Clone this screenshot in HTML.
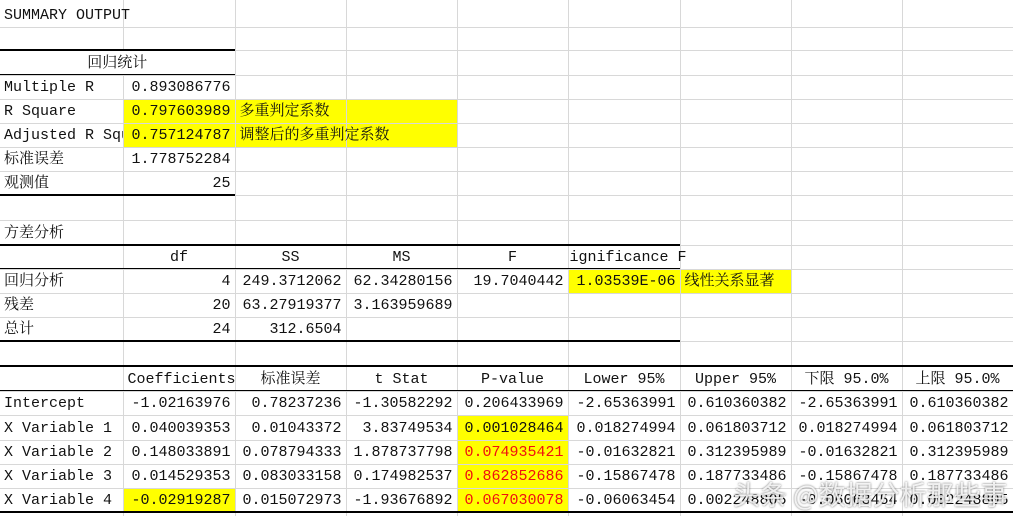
<!DOCTYPE html>
<html><head><meta charset="utf-8">
<style>
html,body{margin:0;padding:0;background:#fff;width:1013px;height:516px;overflow:hidden;position:relative}
table{border-collapse:collapse;table-layout:fixed;width:1013px;position:absolute;left:0;top:0}
td{border-right:1px solid #d8d8d8;border-bottom:1px solid #d8d8d8;padding:0 4px;white-space:nowrap;overflow:visible;
font-family:"Liberation Mono","Noto Serif CJK SC",monospace;font-size:15px;color:#111;line-height:20px;vertical-align:bottom;padding-bottom:1px}
.r{text-align:right}.c{text-align:center}
.y{background:#ffff00}
.red{color:#f01010}
.h{overflow:hidden}
.line{position:absolute;background:#000;height:2px}
.thin{position:absolute;background:#000;height:1px}
.wm{position:absolute;left:733px;top:474px;font-family:"Noto Sans CJK SC",sans-serif;font-size:27px;color:rgba(255,255,255,0.85);text-shadow:0 0 2px rgba(0,0,0,.6);white-space:nowrap;letter-spacing:0}
</style></head><body>
<table>
<colgroup><col style="width:123px"><col style="width:112px"><col style="width:111px"><col style="width:111px"><col style="width:111px"><col style="width:112px"><col style="width:111px"><col style="width:111px"><col style="width:111px"></colgroup>
<tr style="height:27px"><td>SUMMARY OUTPUT</td><td></td><td></td><td></td><td></td><td></td><td></td><td></td><td></td></tr>
<tr style="height:23px"><td></td><td></td><td></td><td></td><td></td><td></td><td></td><td></td><td></td></tr>
<tr style="height:25px"><td colspan="2" class="c">回归统计</td><td></td><td></td><td></td><td></td><td></td><td></td><td></td></tr>
<tr style="height:24px"><td>Multiple R</td><td class="r">0.893086776</td><td></td><td></td><td></td><td></td><td></td><td></td><td></td></tr>
<tr style="height:24px"><td>R Square</td><td class="r y">0.797603989</td><td class="y">多重判定系数</td><td class="y"></td><td></td><td></td><td></td><td></td><td></td></tr>
<tr style="height:24px"><td class="h">Adjusted R Square</td><td class="r y">0.757124787</td><td class="y">调整后的多重判定系数</td><td class="y"></td><td></td><td></td><td></td><td></td><td></td></tr>
<tr style="height:24px"><td>标准误差</td><td class="r">1.778752284</td><td></td><td></td><td></td><td></td><td></td><td></td><td></td></tr>
<tr style="height:24px"><td>观测值</td><td class="r">25</td><td></td><td></td><td></td><td></td><td></td><td></td><td></td></tr>
<tr style="height:25px"><td></td><td></td><td></td><td></td><td></td><td></td><td></td><td></td><td></td></tr>
<tr style="height:25px"><td>方差分析</td><td></td><td></td><td></td><td></td><td></td><td></td><td></td><td></td></tr>
<tr style="height:24px"><td></td><td class="c">df</td><td class="c">SS</td><td class="c">MS</td><td class="c">F</td><td style="padding-left:1px">ignificance F</td><td></td><td></td><td></td></tr>
<tr style="height:24px"><td>回归分析</td><td class="r">4</td><td class="r">249.3712062</td><td class="r">62.34280156</td><td class="r">19.7040442</td><td class="r y">1.03539E-06</td><td class="y">线性关系显著</td><td></td><td></td></tr>
<tr style="height:24px"><td>残差</td><td class="r">20</td><td class="r">63.27919377</td><td class="r">3.163959689</td><td></td><td></td><td></td><td></td><td></td></tr>
<tr style="height:24px"><td>总计</td><td class="r">24</td><td class="r">312.6504</td><td></td><td></td><td></td><td></td><td></td><td></td></tr>
<tr style="height:25px"><td></td><td></td><td></td><td></td><td></td><td></td><td></td><td></td><td></td></tr>
<tr style="height:25px"><td></td><td class="c">Coefficients</td><td class="c">标准误差</td><td class="c">t Stat</td><td class="c">P-value</td><td class="c">Lower 95%</td><td class="c">Upper 95%</td><td class="c">下限 95.0%</td><td class="c">上限 95.0%</td></tr>
<tr style="height:24px"><td>Intercept</td><td class="r">-1.02163976</td><td class="r">0.78237236</td><td class="r">-1.30582292</td><td class="r">0.206433969</td><td class="r">-2.65363991</td><td class="r">0.610360382</td><td class="r">-2.65363991</td><td class="r">0.610360382</td></tr>
<tr style="height:25px"><td>X Variable 1</td><td class="r">0.040039353</td><td class="r">0.01043372</td><td class="r">3.83749534</td><td class="r y">0.001028464</td><td class="r">0.018274994</td><td class="r">0.061803712</td><td class="r">0.018274994</td><td class="r">0.061803712</td></tr>
<tr style="height:24px"><td>X Variable 2</td><td class="r">0.148033891</td><td class="r">0.078794333</td><td class="r">1.878737798</td><td class="r y red">0.074935421</td><td class="r">-0.01632821</td><td class="r">0.312395989</td><td class="r">-0.01632821</td><td class="r">0.312395989</td></tr>
<tr style="height:24px"><td>X Variable 3</td><td class="r">0.014529353</td><td class="r">0.083033158</td><td class="r">0.174982537</td><td class="r y red">0.862852686</td><td class="r">-0.15867478</td><td class="r">0.187733486</td><td class="r">-0.15867478</td><td class="r">0.187733486</td></tr>
<tr style="height:24px"><td>X Variable 4</td><td class="r y">-0.02919287</td><td class="r">0.015072973</td><td class="r">-1.93676892</td><td class="r y red">0.067030078</td><td class="r">-0.06063454</td><td class="r">0.002248805</td><td class="r">-0.06063454</td><td class="r">0.002248805</td></tr>
<tr style="height:10px"><td></td><td></td><td></td><td></td><td></td><td></td><td></td><td></td><td></td></tr>
</table>
<div class="line" style="left:0;top:49px;width:235px"></div>
<div class="thin" style="left:0;top:74px;width:235px"></div>
<div class="line" style="left:0;top:194px;width:235px"></div>
<div class="line" style="left:0;top:244px;width:680px"></div>
<div class="thin" style="left:0;top:268px;width:680px"></div>
<div class="line" style="left:0;top:340px;width:680px"></div>
<div class="line" style="left:0;top:365px;width:1013px"></div>
<div class="thin" style="left:0;top:390px;width:1013px"></div>
<div class="line" style="left:0;top:511px;width:1013px"></div>
<div class="wm">头条 @数据分析那些事</div>
</body></html>
